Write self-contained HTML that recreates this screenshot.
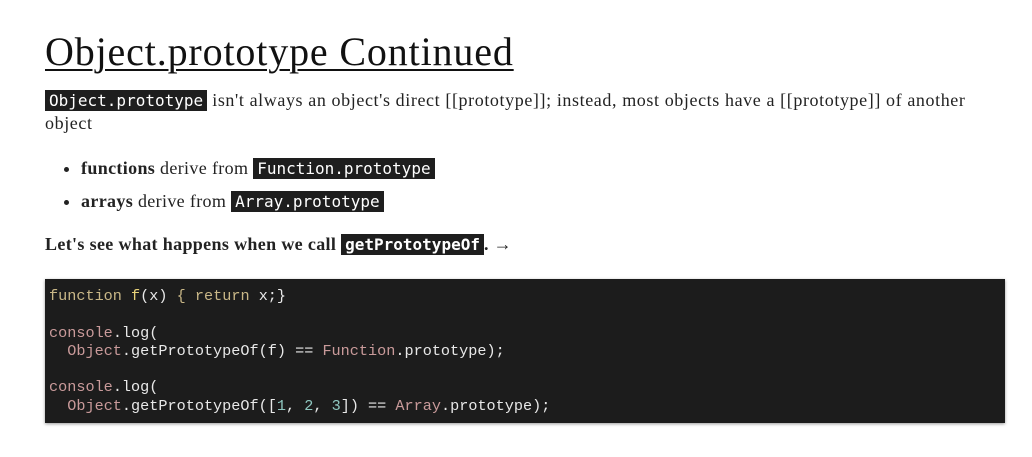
<!DOCTYPE html>
<html><head><style>
body{margin:0;background:#fff;font-family:"Liberation Serif",serif;color:#222;width:1032px;height:457px;overflow:hidden}
.w{position:absolute;left:45px;top:0;width:960px}
h1{font-weight:normal;font-size:40px;letter-spacing:0.85px;text-decoration:underline;text-decoration-thickness:2px;text-underline-offset:4px;margin:29px 0 0;line-height:46px;color:#111}
p{font-size:18px;letter-spacing:.6px;margin:0;line-height:23px}
code{font-family:"DejaVu Sans Mono","Liberation Mono",monospace;background:#1e1e1e;color:#fff;font-size:16px;letter-spacing:0;padding:1px 4px}
ul{margin:17px 0 0;padding-left:36px;font-size:18px;letter-spacing:.35px;line-height:32px}
pre{position:absolute;left:45px;top:279px;width:960px;height:144px;margin:0;background:#1c1c1c;padding:8px 0 0 4px;box-sizing:border-box;font-family:"Liberation Mono",monospace;font-size:15.2px;line-height:18.3px;color:#e8e8e8;box-shadow:0 1px 3px rgba(0,0,0,.4)}
.k{color:#c9b787}.f{color:#e8d27a}.o{color:#c99a9a}.n{color:#8fc7c0}
</style></head><body>
<div class="w">
<h1>Object.prototype Continued</h1>
<p style="margin-top:14px"><code>Object.prototype</code> isn't always an object's direct [[prototype]]; instead, most objects have a [[prototype]] of another<br>object</p>
<ul><li><b>functions</b> derive from <code>Function.prototype</code></li>
<li><b>arrays</b> derive from <code>Array.prototype</code></li></ul>
<p style="margin-top:15px;letter-spacing:.35px"><b>Let's see what happens when we call <code>getPrototypeOf</code>. →</b></p>
</div>
<pre><span class="k">function</span> <span class="f">f</span>(x) <span class="k">{</span> <span class="k">return</span> x;}

<span class="o">console</span>.log(
  <span class="o">Object</span>.getPrototypeOf(f) == <span class="o">Function</span>.prototype);

<span class="o">console</span>.log(
  <span class="o">Object</span>.getPrototypeOf([<span class="n">1</span>, <span class="n">2</span>, <span class="n">3</span>]) == <span class="o">Array</span>.prototype);</pre>
</body></html>
